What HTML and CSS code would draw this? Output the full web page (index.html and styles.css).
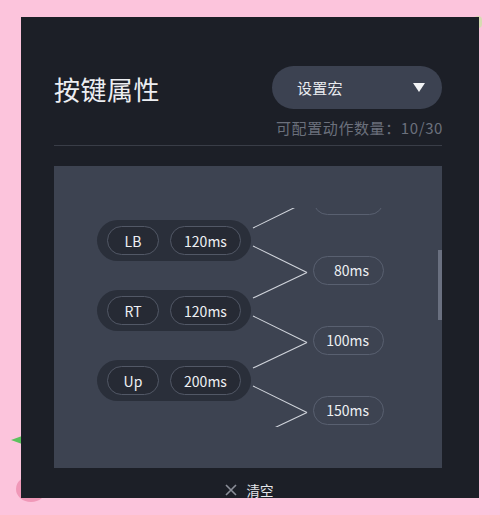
FILE: index.html
```html
<!DOCTYPE html>
<html lang="zh">
<head>
<meta charset="utf-8">
<title>按键属性</title>
<link rel="stylesheet" href="styles.css">
</head>
<body>
<div class="deco deco-leaf"></div>
<div class="deco deco-ball"></div>
<div class="deco deco-corner"></div>
<div class="panel">
  <div class="header">
    <h1 class="title">按键属性</h1>
    <div class="select">
      <span class="select-label">设置宏</span>
      <span class="select-caret"></span>
    </div>
  </div>
  <div class="quota">可配置动作数量：10/30</div>
  <div class="divider"></div>
  <div class="board">
    <div class="viewport">
      <div class="flow">
        <div class="col-left">
          <div class="group"><span class="chip chip-key">LB</span><span class="chip chip-time">120ms</span></div>
          <div class="group"><span class="chip chip-key">RT</span><span class="chip chip-time">120ms</span></div>
          <div class="group"><span class="chip chip-key">Up</span><span class="chip chip-time">200ms</span></div>
        </div>
        <div class="col-right">
          <div class="delay"></div>
          <div class="delay">80ms</div>
          <div class="delay">100ms</div>
          <div class="delay">150ms</div>
        </div>
      </div>
      <svg class="links" width="388" height="219" viewBox="0 0 388 219">
        <g stroke="#d0d4db" stroke-width="1.1" fill="none">
          <line x1="199" y1="20" x2="253" y2="-6.5"/>
          <line x1="199" y1="38" x2="253" y2="64.5"/>
          <line x1="199" y1="90" x2="253" y2="64.5"/>
          <line x1="199" y1="108" x2="253" y2="134.5"/>
          <line x1="199" y1="160" x2="253" y2="134.5"/>
          <line x1="199" y1="178" x2="253" y2="204.5"/>
          <line x1="199" y1="230" x2="253" y2="204.5"/>
        </g>
      </svg>
    </div>
    <div class="scrollbar"></div>
  </div>
  <div class="footer">
    <span class="clear">
      <svg class="clear-icon" width="12" height="12" viewBox="0 0 12 12"><path d="M1 1 L11 11 M11 1 L1 11" stroke="#8b8f99" stroke-width="1.6" fill="none"/></svg>
      <span class="clear-label">清空</span>
    </span>
  </div>
</div>
</body>
</html>
```

FILE: styles.css
```css
html, body {
  margin: 0;
  padding: 0;
}
body {
  width: 500px;
  height: 515px;
  background: #fcc4dc;
  font-family: "Noto Sans CJK SC", "Noto Sans", sans-serif;
  position: relative;
  overflow: hidden;
}
.deco {
  position: absolute;
}
.deco-leaf {
  left: 11px;
  top: 436px;
  width: 0;
  height: 0;
  border-top: 4px solid transparent;
  border-bottom: 4px solid transparent;
  border-right: 11px solid #5cc25e;
}
.deco-ball {
  left: 16px;
  top: 476px;
  width: 30px;
  height: 26px;
  border-radius: 50%;
  background: #f098b8;
}
.deco-corner {
  left: 474px;
  top: 16px;
  width: 8px;
  height: 12px;
  border-radius: 4px;
  background: #c7e6a0;
  opacity: 0.7;
}
.panel {
  position: relative;
  margin: 17px 0 0 21px;
  width: 458px;
  height: 481px;
  box-sizing: border-box;
  padding: 49px 37px 0 33px;
  background: #1c1f27;
  display: flex;
  flex-direction: column;
}
.header {
  display: flex;
  align-items: center;
  height: 43px;
}
.title {
  margin: 0;
  font-size: 26px;
  font-weight: 400;
  color: #eceef2;
  line-height: 43px;
  letter-spacing: 0.5px;
  padding-top: 2px;
}
.select {
  margin-left: auto;
  width: 170px;
  height: 43px;
  box-sizing: border-box;
  border-radius: 22px;
  background: #3c4251;
  display: flex;
  align-items: center;
  padding: 0 17px 0 25px;
}
.select-label {
  font-size: 15px;
  color: #e9ebef;
  letter-spacing: 0.3px;
}
.select-caret {
  margin-left: auto;
  width: 0;
  height: 0;
  border-left: 6px solid transparent;
  border-right: 6px solid transparent;
  border-top: 9px solid #f2f3f5;
}
.quota {
  margin-top: 9px;
  text-align: right;
  font-size: 15px;
  line-height: 20px;
  color: #6b707c;
  letter-spacing: 0.6px;
  margin-right: -1px;
}
.divider {
  margin-top: 7px;
  height: 1px;
  background: #393d47;
}
.board {
  position: relative;
  margin-top: 20px;
  height: 302px;
  background: #3d4351;
  padding-top: 42px;
  box-sizing: border-box;
}
.viewport {
  position: relative;
  height: 219px;
  overflow: hidden;
}
.flow {
  display: flex;
  margin-top: -22px;
  padding-left: 43px;
}
.col-left {
  display: flex;
  flex-direction: column;
  gap: 29px;
  padding-top: 34px;
}
.group {
  display: flex;
  align-items: center;
  gap: 11px;
  height: 41px;
  padding: 0 10px;
  border-radius: 21px;
  background: #2a2f3a;
}
.chip {
  height: 29px;
  box-sizing: border-box;
  border: 1px solid #525866;
  border-radius: 15px;
  background: #262a34;
  color: #eef0f3;
  font-size: 14px;
  display: flex;
  align-items: center;
  justify-content: center;
}
.chip-key {
  width: 52px;
}
.chip-time {
  width: 71px;
}
.col-right {
  display: flex;
  flex-direction: column;
  gap: 41px;
  margin-left: 62px;
}
.delay {
  width: 71px;
  height: 29px;
  box-sizing: border-box;
  border: 1px solid #596070;
  border-radius: 15px;
  color: #eef0f3;
  font-size: 14px;
  line-height: 27px;
  text-align: right;
  padding-right: 14px;
}
.links {
  position: absolute;
  left: 0;
  top: 0;
  overflow: hidden;
}
.scrollbar {
  position: absolute;
  right: 0;
  top: 84px;
  width: 4px;
  height: 70px;
  background: #6a7080;
}
.footer {
  display: flex;
  justify-content: center;
  margin-top: 14px;
  padding-left: 2px;
}
.clear {
  display: flex;
  align-items: center;
  gap: 10px;
}
.clear-label {
  font-size: 13.5px;
  color: #e4e6ea;
  line-height: 16px;
}
```
